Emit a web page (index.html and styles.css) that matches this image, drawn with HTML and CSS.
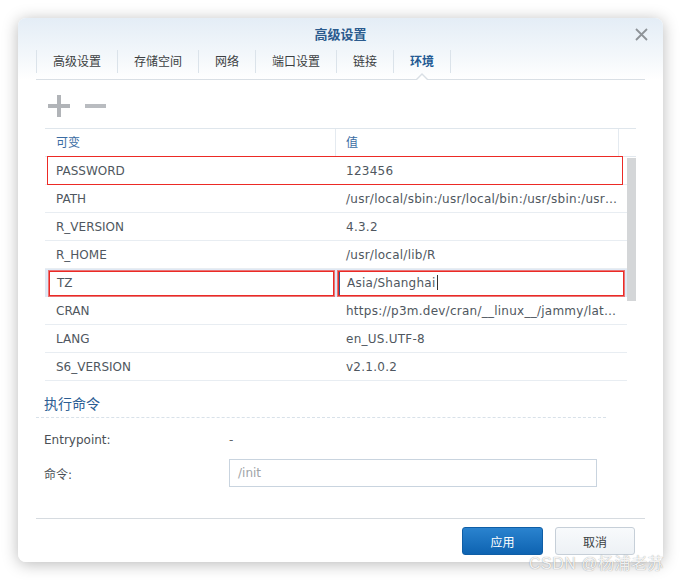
FILE: index.html
```html
<!DOCTYPE html>
<html lang="zh">
	<head>
		<meta charset="UTF-8" />
		<meta name="viewport" content="width=device-width, initial-scale=1.0" />
		<title>高级设置</title>
		<link rel="stylesheet" href="styles.css">
	</head>
	<body>
		<div class="dialog">
			<div class="titlebar">
				<span></span>
				<span class="title">高级设置</span>
				<span class="close">
					<svg width="13" height="13" viewBox="0 0 13 13"><path d="M1 1 L12 12 M12 1 L1 12" stroke="#8e9398" stroke-width="1.8" fill="none"/></svg>
				</span>
			</div>

			<div class="tabs">
				<div class="tab">高级设置</div>
				<div class="tab">存储空间</div>
				<div class="tab">网络</div>
				<div class="tab">端口设置</div>
				<div class="tab">链接</div>
				<div class="tab active">环境</div>
			</div>

			<div class="tab-body">
				<div class="toolbar">
					<svg width="22" height="22" viewBox="0 0 22 22"><rect x="0" y="9" width="22" height="4" fill="#b1b4b8"/><rect x="9" y="0" width="4" height="22" fill="#b1b4b8"/></svg>
					<svg width="22" height="22" viewBox="0 0 22 22"><rect x="0" y="9" width="21" height="4" fill="#b9bcc0"/></svg>
				</div>

				<div class="grid">
					<div class="grid-head">
						<div class="hcell col-name">可变</div>
						<div class="hcell col-value">值</div>
						<div class="hcell col-fill"></div>
					</div>
					<div class="grid-main">
						<div class="rows">
							<div class="row marked">
								<div class="cell col-name">PASSWORD</div>
								<div class="cell col-value">123456</div>
							</div>
							<div class="row">
								<div class="cell col-name">PATH</div>
								<div class="cell col-value">/usr/local/sbin:/usr/local/bin:/usr/sbin:/usr/bin:/sbin:/bin</div>
							</div>
							<div class="row">
								<div class="cell col-name">R_VERSION</div>
								<div class="cell col-value">4.3.2</div>
							</div>
							<div class="row">
								<div class="cell col-name">R_HOME</div>
								<div class="cell col-value">/usr/local/lib/R</div>
							</div>
							<div class="row editing">
								<div class="edit edit-name">TZ</div>
								<div class="edit edit-value">Asia/Shanghai<span class="caret"></span></div>
							</div>
							<div class="row">
								<div class="cell col-name">CRAN</div>
								<div class="cell col-value">https://p3m.dev/cran/__linux__/jammy/latest</div>
							</div>
							<div class="row">
								<div class="cell col-name">LANG</div>
								<div class="cell col-value">en_US.UTF-8</div>
							</div>
							<div class="row">
								<div class="cell col-name">S6_VERSION</div>
								<div class="cell col-value">v2.1.0.2</div>
							</div>
						</div>
						<div class="scrollbar"><div class="thumb"></div></div>
					</div>
				</div>

				<div class="section">
					<div class="section-title">执行命令</div>
					<div class="field">
						<span class="field-label">Entrypoint:</span>
						<span class="field-text">-</span>
					</div>
					<div class="field field-input">
						<span class="field-label">命令:</span>
						<div class="input">/init</div>
					</div>
				</div>
			</div>

			<div class="footer">
				<button class="btn btn-primary">应用</button>
				<button class="btn">取消</button>
			</div>
		</div>
		<div class="watermark">CSDN @杨浦老苏</div>
	</body>
</html>
```

FILE: styles.css
```css
body {
	margin: 0;
	width: 682px;
	height: 580px;
	overflow: hidden;
	background-color: #fff;
	font-family: "DejaVu Sans", "Noto Sans CJK SC", sans-serif;
	font-size: 12px;
	color: #4e565e;
}
.dialog {
	margin: 18px 0 0 18px;
	width: 645px;
	height: 544px;
	border-radius: 8px;
	background: linear-gradient(#e4edf6 0, #f4f8fb 40px, #fff 62px);
	box-shadow: 0 2px 16px rgba(0, 0, 0, 0.28);
	display: flex;
	flex-direction: column;
	padding: 0 18px;
	box-sizing: border-box;
}
.titlebar {
	height: 30px;
	display: grid;
	grid-template-columns: 1fr auto 1fr;
	align-items: center;
}
.title {
	font-size: 13px;
	font-weight: bold;
	color: #2b5b8e;
	padding-top: 1px;
}
.close {
	justify-self: end;
	margin-right: -3px;
	margin-top: 2px;
	height: 13px;
}
.tabs {
	height: 29px;
	padding-top: 2px;
	display: flex;
	align-items: flex-start;
	border-bottom: 1px solid #d9dfe5;
}
.tab {
	height: 23px;
	line-height: 24px;
	padding: 0 16px;
	border-left: 1px solid #dbe3ea;
	color: #3c3f42;
	position: relative;
}
.tab:last-child {
	border-right: 1px solid #dbe3ea;
}
.tab.active {
	color: #245a93;
	font-weight: bold;
}
.tab.active::before,
.tab.active::after {
	content: "";
	position: absolute;
	left: 50%;
	width: 0;
	height: 0;
	border-style: solid;
	border-color: transparent;
}
.tab.active::before {
	bottom: -7px;
	margin-left: -7px;
	border-width: 0 7px 7px 7px;
	border-bottom-color: #d9dfe5;
}
.tab.active::after {
	bottom: -8px;
	margin-left: -6px;
	border-width: 0 6px 6px 6px;
	border-bottom-color: #fff;
}
.tab-body {
	flex: 1;
	display: flex;
	flex-direction: column;
	border-bottom: 1px solid #d6dbe0;
}
.toolbar {
	height: 48px;
	padding-left: 12px;
	display: flex;
	align-items: center;
	gap: 15px;
	padding-top: 4px;
	box-sizing: border-box;
}
.grid {
	margin-left: 9px;
	width: 591px;
	border-top: 1px solid #dfe6ec;
}
.grid-head {
	display: flex;
	height: 27px;
	border-bottom: 1px solid #e2e8ee;
}
.hcell {
	line-height: 28px;
	color: #3a6ca3;
	box-sizing: border-box;
}
.grid-head .col-name {
	width: 291px;
	padding-left: 11px;
	border-right: 1px solid #e4eaf0;
}
.grid-head .col-value {
	width: 283px;
	padding-left: 10px;
	border-right: 1px solid #e4eaf0;
}
.grid-head .col-fill {
	flex: 1;
}
.grid-main {
	display: flex;
}
.rows {
	width: 582px;
}
.row {
	display: flex;
	height: 28px;
	box-sizing: border-box;
	border-bottom: 1px solid #e8edf2;
	position: relative;
}
.cell {
	line-height: 28px;
	box-sizing: border-box;
	white-space: nowrap;
	overflow: hidden;
	text-overflow: ellipsis;
	color: #4f5760;
}
.row .col-name {
	width: 291px;
	padding-left: 11px;
}
.row .col-value {
	width: 291px;
	padding-left: 10px;
	padding-right: 6px;
	letter-spacing: 0.25px;
}
.row.marked::after {
	content: "";
	position: absolute;
	left: 2px;
	right: 4px;
	top: -1px;
	bottom: -1px;
	border: 1px solid #ec2a25;
}
.row.editing {
	background-color: #dfe9f5;
	padding: 2px 3px 0 4px;
	border-bottom-color: #dfe9f5;
}
.edit {
	height: 25px;
	line-height: 23px;
	box-sizing: border-box;
	background-color: #fff;
	border: 1px solid #ec2a25;
	outline: 0.5px solid rgba(236, 42, 37, 0.6);
	color: #4f5760;
}
.edit-name {
	width: 285px;
	padding-left: 7px;
}
.edit-value {
	width: 286px;
	margin-left: 4px;
	padding-left: 8px;
	letter-spacing: 0.25px;
	box-shadow: inset 1px 0 0 #2b5a8c;
}
.caret {
	display: inline-block;
	width: 1px;
	height: 15px;
	background-color: #333;
	vertical-align: -3px;
	margin-left: 1px;
}
.scrollbar {
	flex: 1;
	padding-top: 1px;
}
.thumb {
	width: 9px;
	height: 143px;
	background-color: #d4d6d8;
}
.section {
	margin-top: 13px;
	width: 570px;
}
.section-title {
	font-size: 14px;
	line-height: 20px;
	color: #2b5d93;
	padding-left: 8px;
	padding-bottom: 3px;
	border-bottom: 1px dashed #d8e1e9;
}
.field {
	display: flex;
	align-items: center;
	height: 18px;
	margin-top: 13px;
	padding-left: 8px;
	color: #4a4f55;
}
.field-label {
	width: 185px;
}
.field-text {
	color: #666;
}
.field-input {
	height: 28px;
	margin-top: 10px;
}
.input {
	width: 368px;
	height: 28px;
	box-sizing: border-box;
	border: 1px solid #c9d4df;
	line-height: 26px;
	padding-left: 8px;
	color: #a0a4a8;
}
.footer {
	height: 43px;
	display: flex;
	justify-content: flex-end;
	align-items: flex-start;
	gap: 12px;
	padding: 8px 10px 0 0;
	box-sizing: border-box;
}
.btn {
	width: 80px;
	height: 28px;
	border-radius: 3px;
	border: 1px solid #c6cfd8;
	background: linear-gradient(#f8fafc, #edf1f5);
	font-family: "DejaVu Sans", "Noto Sans CJK SC", sans-serif;
	font-size: 12px;
	color: #3a3f44;
	padding: 0;
}
.btn-primary {
	width: 81px;
	border-color: #0f5ea6;
	background: linear-gradient(#2a83cf, #0e63b1);
	color: #fff;
}
.watermark {
	position: absolute;
	left: 529px;
	top: 550px;
	font-family: "Liberation Sans", "Noto Sans CJK SC", sans-serif;
	font-size: 16px;
	letter-spacing: 0.5px;
	color: rgba(255, 255, 255, 0.9);
	text-shadow: 0 0 1px rgba(0, 0, 0, 0.45);
}
```
